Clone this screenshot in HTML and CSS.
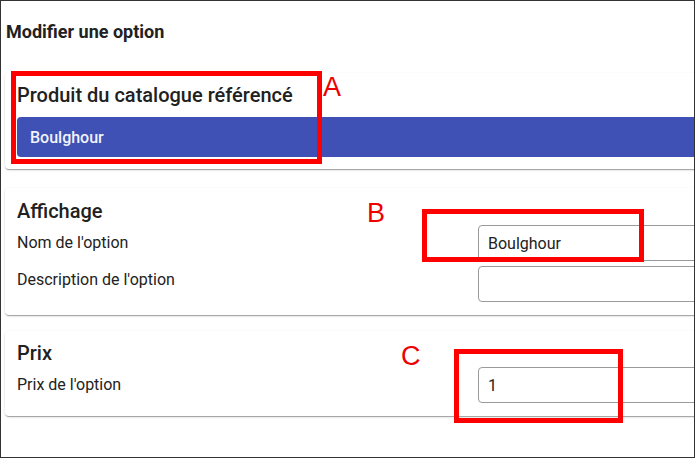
FILE: index.html
```html
<!DOCTYPE html>
<html lang="fr">
<head>
<meta charset="utf-8">
<title>Modifier une option</title>
<link rel="stylesheet" href="styles.css">
</head>
<body>
<div class="frame">
  <h1 class="page-title">Modifier une option</h1>

  <section class="card card-product">
    <h2 class="card-title card-title-spaced">Produit du catalogue référencé</h2>
    <div class="product-bar">Boulghour</div>
  </section>

  <section class="card card-display">
    <h2 class="card-title">Affichage</h2>
    <div class="form-grid">
      <label class="field-label">Nom de l'option</label>
      <div class="field-input">Boulghour</div>
      <label class="field-label field-label-top">Description de l'option</label>
      <div class="field-input"></div>
    </div>
  </section>

  <section class="card card-price">
    <h2 class="card-title">Prix</h2>
    <div class="form-grid">
      <label class="field-label">Prix de l'option</label>
      <div class="field-input">1</div>
    </div>
  </section>

  <div class="mark mark-a"></div>
  <span class="mark-letter letter-a">A</span>
  <div class="mark mark-b"></div>
  <span class="mark-letter letter-b">B</span>
  <div class="mark mark-c"></div>
  <span class="mark-letter letter-c">C</span>
</div>
</body>
</html>
```
FILE: styles.css
```css
* { box-sizing: border-box; }

html, body {
  margin: 0;
  padding: 0;
  background: #ffffff;
}

body {
  font-family: Roboto, "Noto Sans", "Liberation Sans", sans-serif;
  color: rgba(0, 0, 0, 0.87);
}

.frame {
  position: relative;
  width: 695px;
  height: 458px;
  border: 1px solid #333333;
  overflow: hidden;
  padding: 21px 0 0 4px;
  background: #ffffff;
}

.page-title {
  margin: 0 0 31px 1px;
  font-size: 18px;
  line-height: 20px;
  font-weight: 700;
  color: #212121;
}

.card {
  width: 760px;
  background: #ffffff;
  border-radius: 4px;
  box-shadow: 0 2px 1px -1px rgba(0, 0, 0, 0.2),
              0 1px 1px 0 rgba(0, 0, 0, 0.14),
              0 1px 3px 0 rgba(0, 0, 0, 0.12);
}

.card-product {
  padding: 10px 12px 12px 12px;
}

.card-display {
  margin-top: 19px;
  padding: 11px 12px 13px 12px;
}

.card-price {
  margin-top: 16px;
  padding: 10px 12px 13px 12px;
}

.card-title {
  margin: 0;
  font-size: 20px;
  line-height: 24px;
  font-weight: 500;
  color: #212121;
}

.card-title-spaced {
  margin-bottom: 10px;
}

.product-bar {
  height: 40px;
  display: flex;
  align-items: center;
  padding-left: 13px;
  background: #3f51b5;
  border-radius: 4px;
  color: #f2f3fb;
  font-size: 16px;
  font-weight: 500;
}

.form-grid {
  margin-top: 2px;
  display: grid;
  grid-template-columns: 461px 1fr;
  row-gap: 5px;
}

.field-label {
  align-self: center;
  font-size: 16px;
  line-height: 20px;
  color: #222222;
}

.field-label-top {
  align-self: start;
  padding-top: 4px;
}

.field-input {
  height: 36px;
  border: 1px solid #9a9a9a;
  border-radius: 4px;
  padding: 0 9px;
  display: flex;
  align-items: center;
  font-size: 16px;
  color: #222222;
}

.mark {
  position: absolute;
  border: 5px solid #ff0000;
}

.mark-a { left: 10px; top: 70px; width: 311px; height: 93px; }
.mark-b { left: 421px; top: 208px; width: 222px; height: 53px; }
.mark-c { left: 453px; top: 348px; width: 169px; height: 74px; }

.mark-letter {
  position: absolute;
  font-family: "Liberation Sans", Arial, sans-serif;
  font-size: 27px;
  line-height: 27px;
  color: #ee0000;
}

.letter-a { left: 322px; top: 73px; }
.letter-b { left: 366px; top: 199px; }
.letter-c { left: 400px; top: 342px; }
```
